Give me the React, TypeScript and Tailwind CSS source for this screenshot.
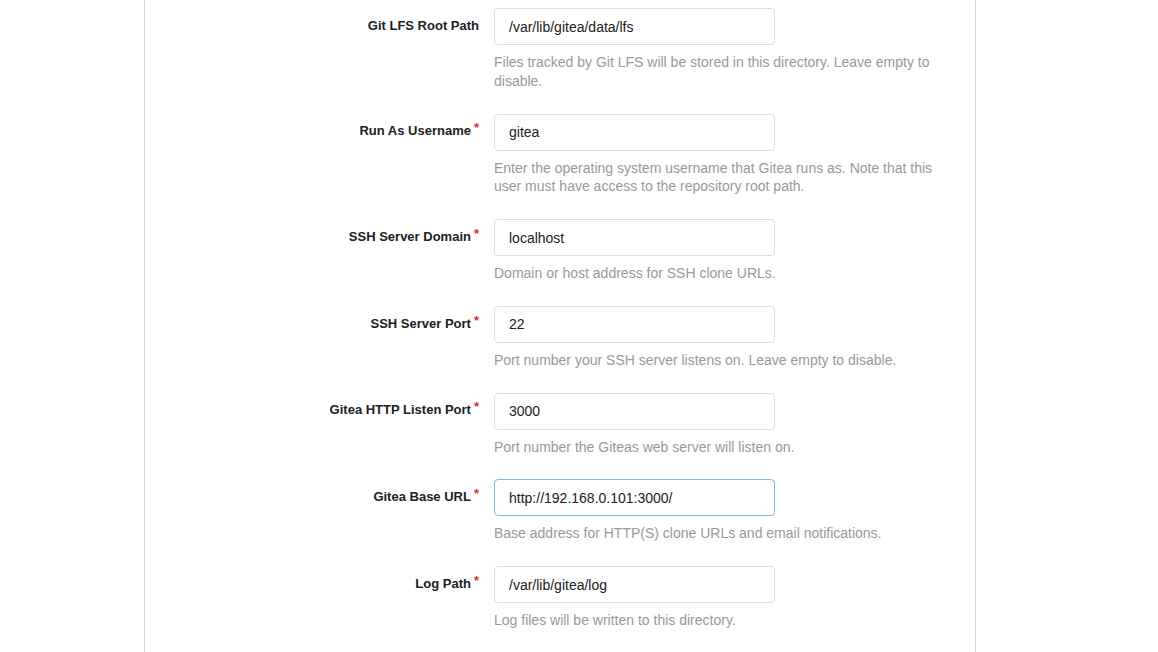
const fields = [
  {
    label: "Git LFS Root Path",
    value: "/var/lib/gitea/data/lfs",
    help: "Files tracked by Git LFS will be stored in this directory. Leave empty to disable.",
    required: false,
  },
  {
    label: "Run As Username",
    value: "gitea",
    help: "Enter the operating system username that Gitea runs as. Note that this user must have access to the repository root path.",
    required: true,
  },
  {
    label: "SSH Server Domain",
    value: "localhost",
    help: "Domain or host address for SSH clone URLs.",
    required: true,
  },
  {
    label: "SSH Server Port",
    value: "22",
    help: "Port number your SSH server listens on. Leave empty to disable.",
    required: true,
  },
  {
    label: "Gitea HTTP Listen Port",
    value: "3000",
    help: "Port number the Giteas web server will listen on.",
    required: true,
  },
  {
    label: "Gitea Base URL",
    value: "http://192.168.0.101:3000/",
    help: "Base address for HTTP(S) clone URLs and email notifications.",
    required: true,
    focused: true,
  },
  {
    label: "Log Path",
    value: "/var/lib/gitea/log",
    help: "Log files will be written to this directory.",
    required: true,
  },
];

export default function App() {
  return (
    <div className="h-[652px] overflow-hidden bg-white font-['Liberation_Sans',Arial,sans-serif]">
      <div className="ml-[144px] w-[832px] min-h-[700px] border-x border-[#d4d4d5] pt-[8px]">
        {fields.map((f) => (
          <div key={f.label} className="mb-[23px]">
            <div className="flex items-center">
              <label className="w-[334px] shrink-0 -mt-[2px] text-right text-[13px] font-bold text-[#212121]">
                {f.label}
                {f.required && (
                  <span className="ml-[3px] inline-block align-top -mt-[3px] text-[13px] text-[#db2828]">*</span>
                )}
              </label>
              <input
                readOnly
                value={f.value}
                className={
                  f.focused
                    ? "ml-[15px] h-[37px] w-[281px] rounded-[4px] border border-[#85b7d9] px-[14px] text-[14px] text-[#212121] outline-none"
                    : "ml-[15px] h-[37px] w-[281px] rounded-[4px] border border-[#dedede] px-[14px] text-[14px] text-[#212121] outline-none"
                }
              />
            </div>
            <p className="ml-[349px] mt-[8px] w-[460px] text-[14px] leading-[18.75px] text-[#999999]">{f.help}</p>
          </div>
        ))}
      </div>
    </div>
  );
}
